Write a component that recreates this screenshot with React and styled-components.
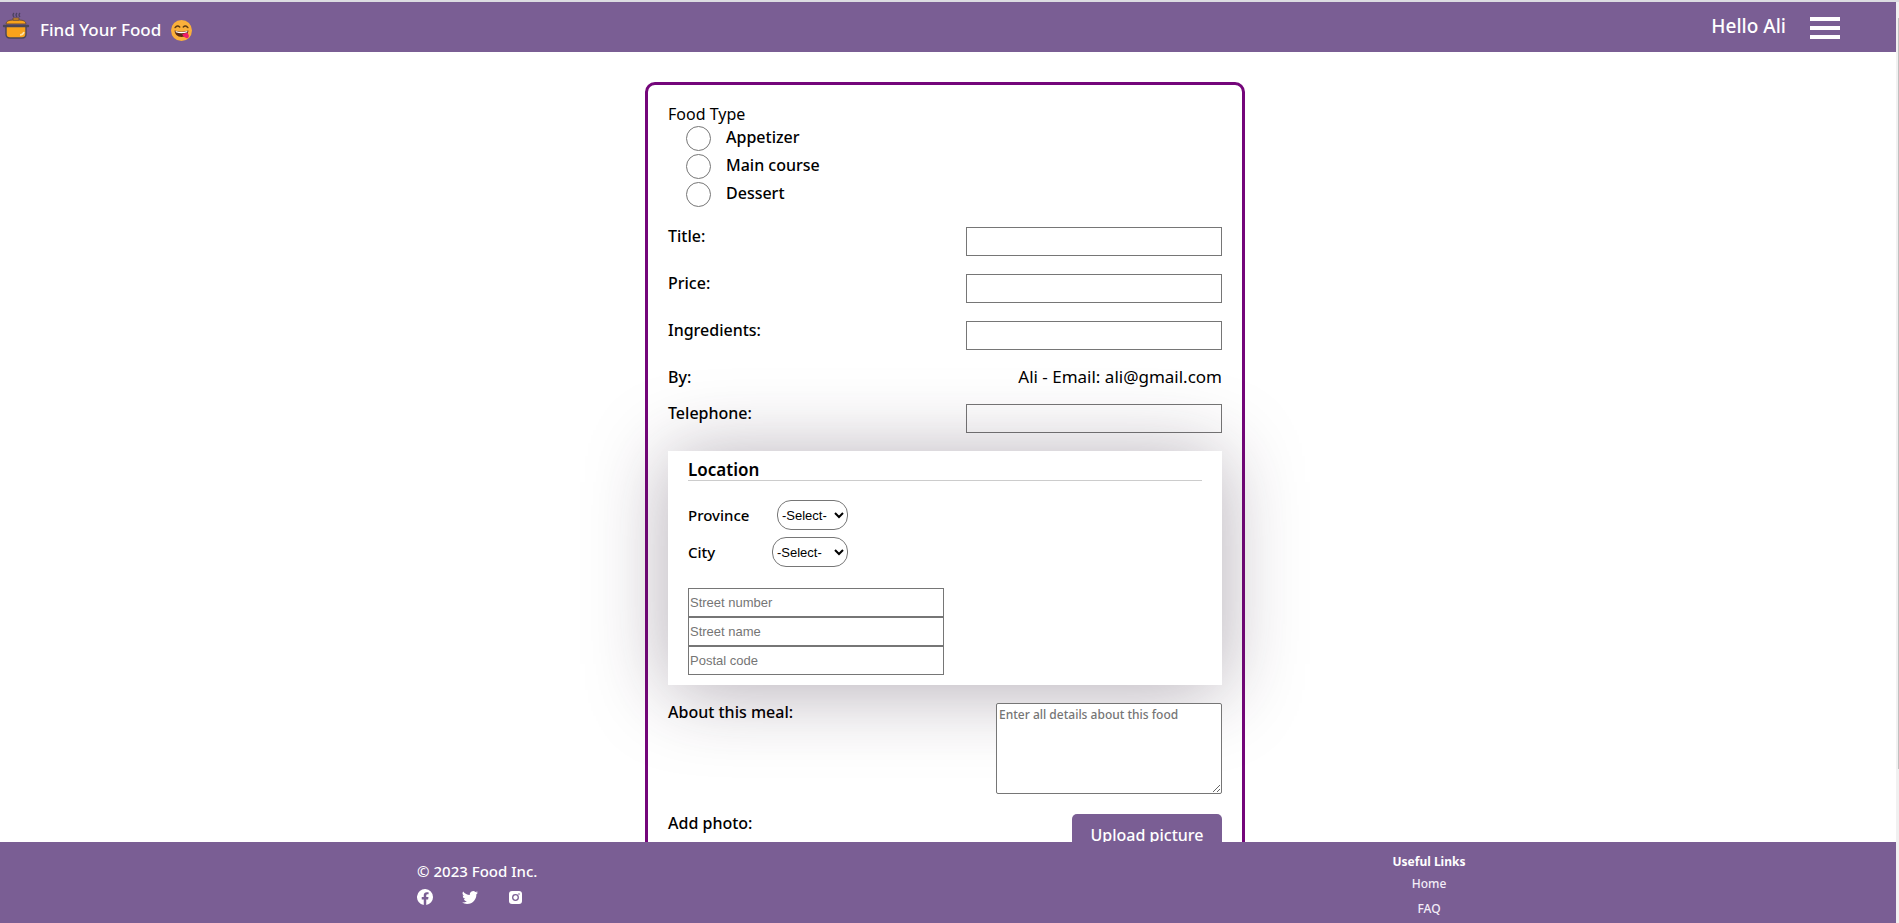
import React from 'react';
import styled, { createGlobalStyle } from 'styled-components';

const purple = '#7a5e94';

const GlobalStyle = createGlobalStyle`
  *, *::before, *::after { box-sizing: border-box; }
  body {
    margin: 0;
    background: #fff;
    color: #000;
    font: 16px/22px "Noto Sans", sans-serif;
  }
`;

const Shell = styled.div`
  display: flex;
  height: 100vh;
  border-top: 2px solid #dcdce2;
  overflow: hidden;
`;

const Page = styled.div`
  flex: 1;
  min-width: 0;
  display: flex;
  flex-direction: column;
`;

const ScrollTrack = styled.div`
  width: 3px;
  padding: 16px 0 0 2px;
  background: #f1f1f1;
`;

const ScrollThumb = styled.div`
  height: 83%;
  background: #c1c1c1;
`;

const Header = styled.header`
  display: flex;
  align-items: center;
  justify-content: space-between;
  flex: none;
  height: 50px;
  padding: 0 56px 0 2px;
  background: ${purple};
  color: #fff;
  font-weight: 500;
`;

const Brand = styled.a`
  display: flex;
  align-items: center;
  gap: 10px;
  padding-top: 6px;
  color: inherit;
  font-size: 17px;
  text-decoration: none;
`;

const PotIcon = styled.svg`
  width: 28px;
  height: 30px;
  margin-top: -8px;
`;

const Account = styled.div`
  display: flex;
  align-items: center;
  gap: 24px;
  padding-bottom: 2px;
  font-size: 19px;
`;

const MenuButton = styled.button`
  display: flex;
  padding: 4px 0 0;
  border: 0;
  background: none;
  color: inherit;
`;

const Main = styled.main`
  flex: 1;
  min-height: 0;
  overflow: hidden;
  padding: 30px 6px 0 0;
`;

const MealForm = styled.form`
  display: flex;
  flex-direction: column;
  width: 600px;
  margin: 0 auto;
  padding: 18px 20px 40px;
  border: 3px solid #74067a;
  border-radius: 10px;
`;

const FoodTypes = styled.fieldset`
  display: flex;
  flex-direction: column;
  gap: 3px;
  margin: 0 0 20px;
  padding: 0 0 0 18px;
  border: 0;
`;

const FoodLegend = styled.legend`
  margin-left: -18px;
  padding: 0;
  line-height: 23px;
`;

const Choice = styled.label`
  display: flex;
  gap: 15px;
  height: 25px;
  font-weight: 500;
`;

const Radio = styled.input`
  appearance: none;
  width: 25px;
  height: 25px;
  margin: 0;
  border: 1px solid #767676;
  border-radius: 50%;
  background: #fff;
  &:checked { background: radial-gradient(${purple} 50%, #fff 55%); }
`;

const Row = styled.div`
  display: flex;
  justify-content: space-between;
  align-items: flex-start;
  margin-bottom: ${(p) => p.$gap || 18}px;
  line-height: 18px;
`;

const Label = styled.label`
  font-weight: 500;
`;

const Owner = styled.span`
  font-size: 17px;
`;

const TextBox = styled.input`
  width: 256px;
  height: 29px;
  padding: 1px;
  border: 1px solid #767676;
  border-radius: 0;
  background: #fff;
  font: 13px "Liberation Sans", Arial, sans-serif;
  &::placeholder { color: #757575; }
`;

const LocationCard = styled.section`
  position: relative;
  display: flex;
  flex-direction: column;
  margin-bottom: 18px;
  padding: 8px 20px 10px;
  background: #fff;
  box-shadow: 0 5px 80px rgba(45, 25, 50, 0.36);
`;

const CardTitle = styled.h2`
  margin: 0 0 19px;
  border-bottom: 1px solid #ccc;
  font-size: 17px;
  font-weight: 600;
  line-height: 21px;
`;

const SelectRow = styled.div`
  display: flex;
  justify-content: space-between;
  align-items: center;
  width: 160px;
  margin-bottom: 7px;
  font-size: 15px;
`;

const Select = styled.select`
  width: ${(p) => p.$width}px;
  height: 30px;
  padding: 0;
  border: 1px solid #767676;
  border-radius: 14px;
  background: #fff;
  color: #000;
  font: 13px "Liberation Sans", Arial, sans-serif;
`;

const AddressFields = styled.div`
  display: flex;
  flex-direction: column;
  margin-top: 14px;
`;

const Details = styled.textarea`
  position: relative;
  width: 226px;
  height: 91px;
  padding: 2px;
  border: 1px solid #767676;
  border-radius: 2px;
  background: #fff;
  font: 500 12px/17px "Noto Sans", sans-serif;
  &::placeholder { color: #757575; }
`;

const UploadButton = styled.button`
  width: 150px;
  height: 42px;
  padding: 0;
  border: 0;
  border-radius: 5px;
  background: ${purple};
  color: #fff;
  font: 500 16px "Noto Sans", sans-serif;
`;

const Footer = styled.footer`
  display: grid;
  grid-template-columns: 1fr 1fr;
  flex: none;
  height: 81px;
  padding-top: 9px;
  background: ${purple};
  color: #fff;
  font-weight: 500;
`;

const Company = styled.div`
  display: flex;
  flex-direction: column;
  gap: 7px;
  padding: 9px 0 0 44%;
  font-size: 15px;
`;

const UsefulLinks = styled.nav`
  display: flex;
  flex-direction: column;
  align-items: center;
  padding-left: 14px;
`;

const Socials = styled.div`
  display: flex;
  gap: 29px;
`;

const SocialLink = styled.a`
  display: flex;
  color: inherit;
`;

const LinksTitle = styled.h3`
  margin: 0 0 1px;
  font-size: 12px;
  font-weight: 700;
  line-height: 22px;
`;

const FooterLink = styled.a`
  margin-bottom: 5px;
  color: #f3edf8;
  font-size: 12px;
  line-height: 20px;
  text-decoration: none;
`;

const Pot = () => (
  <PotIcon viewBox="0 0 28 30" aria-hidden="true">
    <path d="M12 6q-2-2 0-4M15 6q-2-2 0-4M18 6q-2-2 0-4" fill="none" stroke="#4b4360" strokeWidth="1.2" />
    <path d="M4 15v8q0 4 4 4h12q4 0 4-4v-8z" fill="#f9a21b" stroke="#4a4658" strokeWidth="1.4" />
    <path d="M4 13q0-4 7-4h6q7 0 7 4z" fill="#f9a21b" stroke="#6b4c3a" />
    <path d="M11 9V7h6v2z" fill="#f9a21b" stroke="#6b4c3a" />
    <path d="M2 15h24" stroke="#4a4658" strokeWidth="2.4" strokeLinecap="round" />
    <path d="M18 24q3 0 4-3" fill="none" stroke="#fde3a6" strokeWidth="1.6" />
  </PotIcon>
);

const Emoji = () => (
  <svg width="21" height="21" viewBox="0 0 36 36" role="img" aria-label="Yummy face">
    <circle cx="18" cy="18" r="18" fill="#fbb03b" />
    <path d="M7 13q4-5 8-1M21 12q4-4 8 1" fill="none" stroke="#5c3a12" strokeWidth="2.4" strokeLinecap="round" />
    <path d="M6 18q12 4 24 0-1 11-12 11T6 18z" fill="#5c2a12" />
    <path d="M8 19q10 3 20 0v2q-10 3-20 0z" fill="#fff" />
    <path d="M19 25q4-3 9-3 5 6 1 9-5 2-10-6z" fill="#ee1c6a" />
  </svg>
);

const fields = ['Title', 'Price', 'Ingredients'];

export default function App() {
  return (
    <Shell>
      <GlobalStyle />
      <Page>
        <Header>
          <Brand href="#home">
            <Pot />
            Find Your Food
            <Emoji />
          </Brand>
          <Account>
            <span>Hello Ali</span>
            <MenuButton type="button" aria-label="Menu">
              <svg width="30" height="22" viewBox="0 0 30 22" fill="currentColor">
                <path d="M0 0h30v4H0zM0 9h30v4H0zM0 18h30v4H0z" />
              </svg>
            </MenuButton>
          </Account>
        </Header>

        <Main>
          <MealForm>
            <FoodTypes>
              <FoodLegend>Food Type</FoodLegend>
              {['Appetizer', 'Main course', 'Dessert'].map((name) => (
                <Choice key={name}>
                  <Radio type="radio" name="foodType" value={name} />
                  {name}
                </Choice>
              ))}
            </FoodTypes>
            {fields.map((name) => (
              <Row key={name}>
                <Label htmlFor={name}>{name}:</Label>
                <TextBox id={name} type="text" />
              </Row>
            ))}
            <Row>
              <Label as="span">By:</Label>
              <Owner>Ali - Email: ali@gmail.com</Owner>
            </Row>
            <Row>
              <Label htmlFor="telephone">Telephone:</Label>
              <TextBox id="telephone" type="tel" />
            </Row>
            <LocationCard>
              <CardTitle>Location</CardTitle>
              <SelectRow>
                <Label htmlFor="province">Province</Label>
                <Select id="province" $width={71}>
                  <option>-Select-</option>
                </Select>
              </SelectRow>
              <SelectRow>
                <Label htmlFor="city">City</Label>
                <Select id="city" $width={76}>
                  <option>-Select-</option>
                </Select>
              </SelectRow>
              <AddressFields>
                {['Street number', 'Street name', 'Postal code'].map((name) => (
                  <TextBox key={name} type="text" placeholder={name} aria-label={name} />
                ))}
              </AddressFields>
            </LocationCard>
            <Row $gap={20}>
              <Label htmlFor="about">About this meal:</Label>
              <Details id="about" placeholder="Enter all details about this food" />
            </Row>
            <Row>
              <Label as="span">Add photo:</Label>
              <UploadButton type="button">Upload picture</UploadButton>
            </Row>
          </MealForm>
        </Main>

        <Footer>
          <Company>
            <span>© 2023 Food Inc.</span>
            <Socials>
              <SocialLink href="#facebook" aria-label="Facebook">
                <svg width="16" height="16" viewBox="0 0 16 16" fill="currentColor">
                  <path d="M16 8.05A8 8 0 1 0 6.75 16v-5.62H4.72V8.05h2.03V6.27c0-2.02 1.2-3.13 3.02-3.13.88 0 1.79.16 1.79.16v1.98h-1.01c-.99 0-1.3.62-1.3 1.25v1.52h2.22l-.36 2.33H9.25V16A8 8 0 0 0 16 8.05z" />
                </svg>
              </SocialLink>
              <SocialLink href="#twitter" aria-label="Twitter">
                <svg width="16" height="16" viewBox="0 0 16 16" fill="currentColor">
                  <path d="M5.03 15c6.03 0 9.33-5 9.33-9.33v-.42A6.7 6.7 0 0 0 16 3.54a6.5 6.5 0 0 1-1.89.52 3.3 3.3 0 0 0 1.45-1.82 6.5 6.5 0 0 1-2.09.8 3.28 3.28 0 0 0-5.59 2.99A9.3 9.3 0 0 1 1.11 2.6a3.28 3.28 0 0 0 1.02 4.38 3.2 3.2 0 0 1-1.49-.41v.04a3.28 3.28 0 0 0 2.63 3.22 3.2 3.2 0 0 1-1.48.06 3.28 3.28 0 0 0 3.07 2.27A6.6 6.6 0 0 1 0 13.52 9.3 9.3 0 0 0 5.03 15z" />
                </svg>
              </SocialLink>
              <SocialLink href="#instagram" aria-label="Instagram">
                <svg width="16" height="16" viewBox="0 0 16 16" fill="none">
                  <rect x="2" y="2" width="13" height="13" rx="3" fill="currentColor" />
                  <circle cx="8.5" cy="8.5" r="2.8" stroke={purple} strokeWidth="1.3" />
                  <circle cx="12" cy="5" r="0.8" fill={purple} />
                </svg>
              </SocialLink>
            </Socials>
          </Company>
          <UsefulLinks>
            <LinksTitle>Useful Links</LinksTitle>
            <FooterLink href="#home">Home</FooterLink>
            <FooterLink href="#faq">FAQ</FooterLink>
          </UsefulLinks>
        </Footer>
      </Page>
      <ScrollTrack>
        <ScrollThumb />
      </ScrollTrack>
    </Shell>
  );
}
